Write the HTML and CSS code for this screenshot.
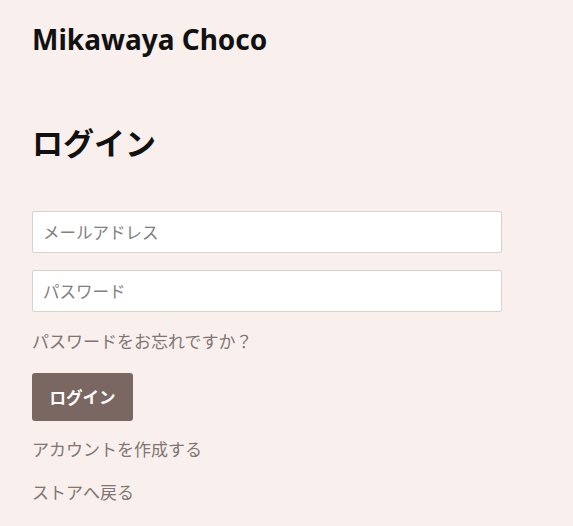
FILE: index.html
```html
<!DOCTYPE html>
<html lang="ja">
<head>
<meta charset="utf-8">
<title>ログイン</title>
<link rel="stylesheet" href="styles.css">
</head>
<body>
<div class="page">
  <header class="site-header">
    <div class="brand">Mikawaya Choco</div>
  </header>
  <main class="login">
    <h1 class="login-title">ログイン</h1>
    <form class="login-form">
      <input class="field" type="email" placeholder="メールアドレス">
      <input class="field" type="password" placeholder="パスワード">
      <a class="link forgot" href="#">パスワードをお忘れですか？</a>
      <button class="btn" type="button">ログイン</button>
      <a class="link" href="#">アカウントを作成する</a>
      <a class="link" href="#">ストアへ戻る</a>
    </form>
  </main>
</div>
</body>
</html>
```

FILE: styles.css
```css
html, body {
  margin: 0;
  padding: 0;
  background: #f9efed;
}
body {
  font-family: "Noto Sans", "Noto Sans CJK JP", sans-serif;
  color: #111;
}
.page {
  padding: 18px 32px 0 32px;
}
.brand {
  font-family: "Noto Sans", "Noto Sans CJK JP", sans-serif;
  font-weight: 700;
  font-size: 28px;
  line-height: 42px;
  color: #111;
}
.login-title {
  font-family: "Noto Sans CJK JP", sans-serif;
  font-weight: 700;
  font-size: 31px;
  line-height: 44px;
  margin: 60px 0 0 0;
}
.login-form {
  display: flex;
  flex-direction: column;
  align-items: flex-start;
  margin-top: 47px;
  width: 470px;
}
.field {
  box-sizing: border-box;
  width: 470px;
  height: 42px;
  border: 1px solid #d6d2d0;
  border-radius: 2px;
  background: #fff;
  padding: 0 10px;
  font-family: "Noto Sans CJK JP", sans-serif;
  font-size: 16.5px;
  color: #333;
  margin-bottom: 17px;
  outline: none;
}
.field::placeholder {
  color: #808080;
}
.link {
  font-family: "Noto Sans CJK JP", sans-serif;
  font-size: 17px;
  line-height: 24px;
  color: #807572;
  text-decoration: none;
}
.btn {
  margin-top: 20px;
  width: 101px;
  height: 48px;
  border: none;
  border-radius: 3px;
  background: #7a6761;
  color: #fff;
  font-family: "Noto Sans CJK JP", sans-serif;
  font-weight: 700;
  font-size: 16.5px;
  cursor: pointer;
  margin-bottom: 16px;
}
.btn + .link {
  margin-bottom: 19px;
}
```
